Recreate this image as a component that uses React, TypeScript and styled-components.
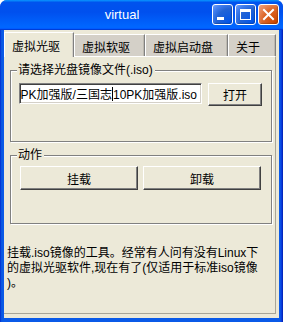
import React from "react";
import styled, { createGlobalStyle } from "styled-components";

const Global = createGlobalStyle`
  html, body { margin: 0; padding: 0; background: #fff; }
  body { font-family: Tahoma, "Liberation Sans", "Noto Sans CJK SC", sans-serif; font-size: 12px; color: #000; }
`;

const Window = styled.div`
  width: 283px;
  height: 322px;
  display: flex;
  flex-direction: column;
  background: linear-gradient(90deg, #0019cf 0px, #0855dd 1px, #0a5ae8 3px, #0a5ae8 calc(100% - 3px), #0831d9 calc(100% - 1px), #001ea0 100%);
  border-radius: 7px 7px 0 0;
  overflow: hidden;
  box-sizing: border-box;
`;

const TitleBar = styled.div`
  height: 30px;
  flex: none;
  display: flex;
  align-items: center;
  padding-right: 4px;
  background: linear-gradient(180deg, #0997ff, #0053ee 8%, #0050ee 40%, #06f 88%, #06f 93%, #005bff 95%, #003dd7 96%, #003dd7);
  box-sizing: border-box;
`;

const Title = styled.div`
  flex: 1;
  padding-left: 32px;
  padding-bottom: 1px;
  text-align: center;
  color: #fff;
  font-family: "Liberation Sans", Tahoma, sans-serif;
  font-size: 13px;
`;

const Controls = styled.div`
  display: flex;
  gap: 2px;
  padding-bottom: 1px;
`;

const CtrlButton = styled.div<{ $close?: boolean }>`
  width: 21px;
  height: 21px;
  box-sizing: border-box;
  border: 1px solid #fff;
  border-radius: 3px;
  display: flex;
  align-items: center;
  justify-content: center;
  background: ${(p) =>
    p.$close
      ? "radial-gradient(circle at 90% 90%, #cc4600 0%, #dc6527 55%, #e88a5d 80%, #f0a07c 100%)"
      : "radial-gradient(circle at 90% 90%, #0054e9 0%, #2263d5 55%, #4480f0 80%, #73a1f7 100%)"};
  box-shadow: inset -1px -1px 1px rgba(0, 0, 0, 0.2);
`;

const Body = styled.div`
  flex: 1;
  margin: 0 4px 4px 4px;
  background: #ece9d8;
  display: flex;
  flex-direction: column;
`;

const TabStrip = styled.div`
  height: 26px;
  display: flex;
  align-items: flex-end;
  flex: none;
  position: relative;
  z-index: 1;
`;

const Tab = styled.div<{ $active?: boolean; $w: number }>`
  width: ${(p) => p.$w}px;
  height: ${(p) => (p.$active ? 25 : 22)}px;
  box-sizing: border-box;
  padding-left: 7px;
  display: flex;
  align-items: center;
  white-space: nowrap;
  background: ${(p) => (p.$active ? "#ece9d8" : "#d4d0c8")};
  border-left: 1px solid #fff;
  border-top: 1px solid #fff;
  border-right: 1px solid #808080;
  box-shadow: ${(p) => (p.$active ? "inset -1px 0 0 #d4d0c8" : "inset -1px 0 0 #bdb9b0")};
  margin-bottom: ${(p) => (p.$active ? "-1px" : "0")};
  padding-top: ${(p) => (p.$active ? "0" : "1px")};
`;

const Panel = styled.div`
  flex: 1;
  margin: 0 3px 4px 0;
  border-top: 1px solid #fff;
  border-right: 1px solid #a8a598;
  border-bottom: 1px solid #a8a598;
  padding: 6px 0 0 3px;
  display: flex;
  flex-direction: column;
`;

const Group = styled.div<{ $h: number; $pt: number; $pl: number; $mt?: number }>`
  position: relative;
  width: 262px;
  height: ${(p) => p.$h}px;
  box-sizing: border-box;
  margin: ${(p) => p.$mt ?? 7}px 0 0 3px;
  border: 1px solid #808080;
  box-shadow: 1px 1px 0 #fff, inset 1px 1px 0 #fff;
  padding: ${(p) => p.$pt}px 0 0 ${(p) => p.$pl}px;
  display: flex;
  align-items: flex-start;
`;

const Legend = styled.span`
  position: absolute;
  top: -8px;
  left: 6px;
  padding: 0 2px 0 1px;
  background: #ece9d8;
  line-height: 14px;
  white-space: nowrap;
`;

const Field = styled.div`
  width: 183px;
  height: 21px;
  box-sizing: border-box;
  background: #fff;
  border-top: 1px solid #808080;
  border-left: 1px solid #808080;
  border-bottom: 1px solid #fff;
  border-right: 1px solid #fff;
  box-shadow: inset 1px 1px 0 #404040, inset -1px -1px 0 #d4d0c8;
  display: flex;
  justify-content: flex-end;
  align-items: center;
  overflow: hidden;
  white-space: nowrap;
  padding-right: 4px;
  font-size: 12px;
`;

const FieldText = styled.span`
  flex: none;
`;

const Caret = styled.span`
  flex: none;
  width: 1px;
  height: 14px;
  background: #000;
`;

const Button = styled.button<{ $w: number; $h: number }>`
  width: ${(p) => p.$w}px;
  height: ${(p) => p.$h}px;
  box-sizing: border-box;
  background: #ece9d8;
  border-top: 1px solid #fff;
  border-left: 1px solid #fff;
  border-right: 1px solid #404040;
  border-bottom: 1px solid #404040;
  box-shadow: inset -1px -1px 0 #808080;
  font-family: Tahoma, "Liberation Sans", "Noto Sans CJK SC", sans-serif;
  font-size: 12px;
  color: #000;
  padding: 0;
  margin: 0;
`;

const Row = styled.div<{ $gap: number }>`
  display: flex;
  gap: ${(p) => p.$gap}px;
  align-items: flex-start;
`;

const Desc = styled.div`
  margin-top: 22px;
  line-height: 15px;
  white-space: nowrap;
  font-size: 12px;
`;

export default function App() {
  return (
    <>
      <Global />
      <Window>
        <TitleBar>
          <Title>virtual</Title>
          <Controls>
            <CtrlButton>
              <svg width="19" height="19" viewBox="0 0 19 19">
                <rect x="4" y="12" width="7" height="3" fill="#fff" />
              </svg>
            </CtrlButton>
            <CtrlButton>
              <svg width="19" height="19" viewBox="0 0 19 19">
                <rect x="4.5" y="4.5" width="10" height="10" fill="none" stroke="#fff" strokeWidth="1" />
                <rect x="4" y="4" width="11" height="3" fill="#fff" />
              </svg>
            </CtrlButton>
            <CtrlButton $close>
              <svg width="19" height="19" viewBox="0 0 19 19">
                <path d="M5 5 L14 14 M14 5 L5 14" stroke="#fff" strokeWidth="2" strokeLinecap="square" />
              </svg>
            </CtrlButton>
          </Controls>
        </TitleBar>
        <Body>
          <TabStrip>
            <Tab $active $w={70}>虚拟光驱</Tab>
            <Tab $w={71}>虚拟软驱</Tab>
            <Tab $w={83}>虚拟启动盘</Tab>
            <Tab $w={48}>关于</Tab>
          </TabStrip>
          <Panel>
            <Group $h={72} $pt={12} $pl={8}>
              <Legend>请选择光盘镜像文件(.iso)</Legend>
              <Row $gap={6}>
                <Field>
                  <FieldText>三国志10PK加强版/三国志</FieldText>
                  <Caret />
                  <FieldText>10PK加强版.iso</FieldText>
                </Field>
                <Button $w={54} $h={23}>打开</Button>
              </Row>
            </Group>
            <Group $h={69} $pt={10} $pl={9} $mt={13}>
              <Legend>动作</Legend>
              <Row $gap={5}>
                <Button $w={118} $h={24}>挂载</Button>
                <Button $w={118} $h={24}>卸载</Button>
              </Row>
            </Group>
            <Desc>
              挂载.iso镜像的工具。经常有人问有没有Linux下
              <br />
              的虚拟光驱软件,现在有了(仅适用于标准iso镜像
              <br />
              )。
            </Desc>
          </Panel>
        </Body>
      </Window>
    </>
  );
}
